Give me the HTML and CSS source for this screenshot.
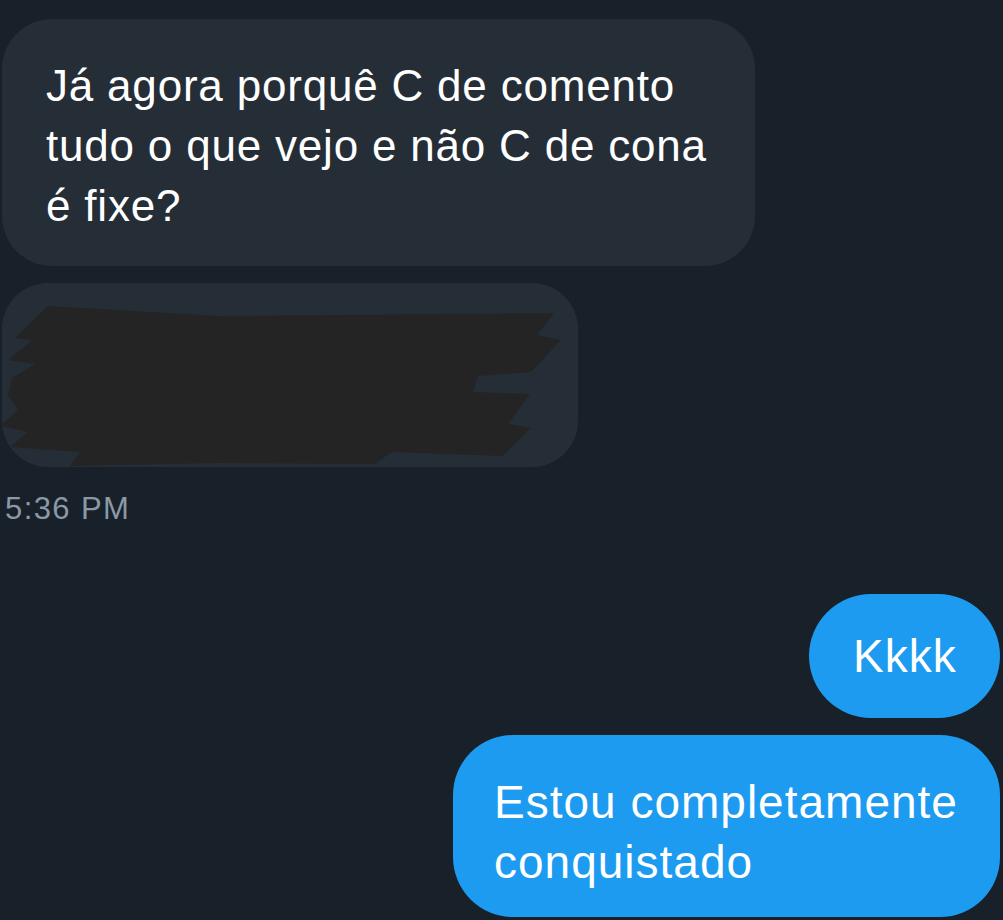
FILE: index.html
```html
<!DOCTYPE html>
<html lang="pt">
<head>
<meta charset="utf-8">
<title>Conversa</title>
<link rel="stylesheet" href="styles.css">
</head>
<body>
<main class="thread">
  <div class="bubble in text-in">Já agora porquê C de comento tudo o que vejo e não C de cona é fixe?</div>
  <div class="bubble in redacted">
    <svg class="scribble" viewBox="0 283 580 190" width="580" height="190" aria-hidden="true">
      <polygon fill="#242424" points="48,306 220,316 554,313 537,335 561,340 531,372 478,376 473,392 530,394 508,424 531,428 502,456 392,452 375,464 220,463 70,466 80,452 10,447 28,432 0,426 18,410 8,395 12,378 35,364 8,360 32,340 15,338"/>
    </svg>
  </div>
  <div class="time">5:36 PM</div>
  <div class="bubble out short">Kkkk</div>
  <div class="bubble out long">Estou completamente conquistado</div>
</main>
</body>
</html>
```

FILE: styles.css
```css
html, body {
  margin: 0;
  padding: 0;
  background: #18202a;
  height: 920px;
  overflow: hidden;
}

.thread {
  display: flex;
  flex-direction: column;
  padding: 19px 3px 0 2px;
  font-family: "Liberation Sans", Arial, sans-serif;
  color: #ffffff;
}

.bubble {
  box-sizing: border-box;
}

.in {
  align-self: flex-start;
  background: #252e37;
}

.text-in {
  width: 753px;
  padding: 37px 30px 30px 44px;
  border-radius: 50px;
  font-size: 44px;
  line-height: 60px;
  letter-spacing: 0.8px;
}

.redacted {
  position: relative;
  width: 576px;
  height: 184px;
  margin-top: 17px;
  border-radius: 46px;
}

.scribble {
  position: absolute;
  left: -2px;
  top: 0;
  display: block;
}

.time {
  margin-top: 24px;
  font-size: 31px;
  line-height: 36px;
  letter-spacing: 1.4px;
  color: #8b98a5;
  padding-left: 3px;
}

.out {
  align-self: flex-end;
  background: #1d9bf0;
  font-size: 46px;
  line-height: 60px;
  letter-spacing: 1px;
}

.short {
  margin-top: 67px;
  width: 191px;
  height: 124px;
  padding: 32px 20px 32px 44px;
  border-radius: 62px;
}

.long {
  margin-top: 17px;
  width: 547px;
  padding: 37px 30px 25px 41px;
  border-radius: 60px;
}
```
